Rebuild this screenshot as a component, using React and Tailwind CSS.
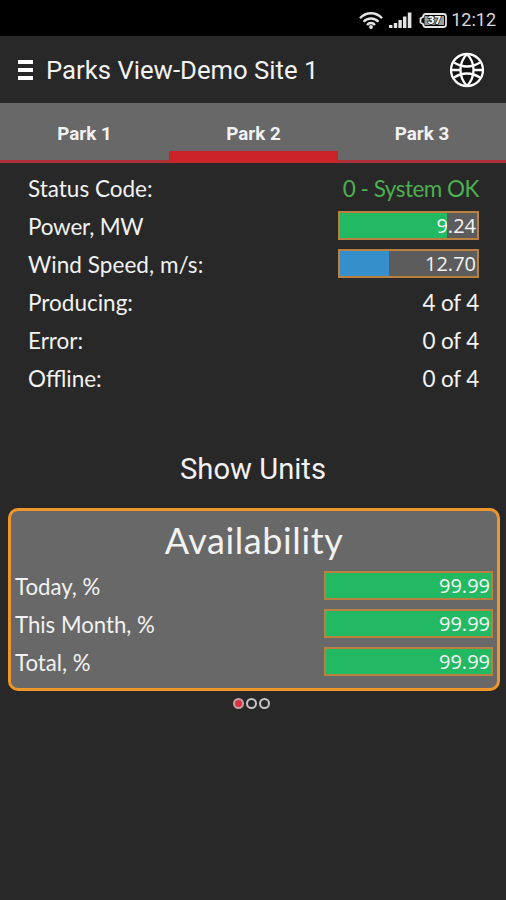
import React from 'react';

const tabs = ['Park 1', 'Park 2', 'Park 3'];

const statusRows = [
  { label: 'Status Code:', value: '0 - System OK', valueClass: 'text-[#4caf50] tracking-[-0.5px]' },
  { label: 'Power, MW', labelClass: 'tracking-[-0.2px]', bar: { value: '9.24', percent: 78, color: 'bg-[#22b962]' } },
  { label: 'Wind Speed, m/s:', labelClass: 'tracking-[0.05px]', bar: { value: '12.70', percent: 36, color: 'bg-[#348fca]' } },
  { label: 'Producing:', value: '4 of 4', valueClass: 'tracking-[-0.2px]' },
  { label: 'Error:', value: '0 of 4', valueClass: 'tracking-[-0.2px]' },
  { label: 'Offline:', value: '0 of 4', valueClass: 'tracking-[-0.2px]' },
];

const availability = [
  { label: 'Today, %', value: '99.99' },
  { label: 'This Month, %', value: '99.99' },
  { label: 'Total, %', value: '99.99' },
];

const WifiIcon = () => (
  <svg width="24" height="17" viewBox="0 0 24 17" fill="none" stroke="#e4e4e4" strokeWidth="2.4">
    <path d="M1 6.2C7 -0.4 17 -0.4 23 6.2" />
    <path d="M4.6 9.8C8.6 5.4 15.4 5.4 19.4 9.8" />
    <path d="M8 13C10.2 10.4 13.8 10.4 16 13" />
    <circle cx="12" cy="15" r="1.9" fill="#e4e4e4" stroke="none" />
  </svg>
);

const SignalIcon = () => (
  <svg width="23" height="16" viewBox="0 0 23 16" fill="#e4e4e4">
    <rect x="0" y="13" width="3.4" height="3" />
    <rect x="4.8" y="11" width="3.4" height="5" />
    <rect x="9.4" y="8" width="3.4" height="8" />
    <rect x="14" y="4.5" width="3.4" height="11.5" />
    <rect x="18.8" y="0.5" width="3.6" height="15.5" />
  </svg>
);

const BatteryIcon = () => (
  <svg width="28" height="15" viewBox="0 0 28 15">
    <path d="M6.5 1H24.5Q27 1 27 3.5V11.5Q27 14 24.5 14H6.5Q4.5 14 4 11L1.5 9.5V5.5L4 4Q4.5 1 6.5 1Z" fill="none" stroke="#e4e4e4" strokeWidth="1.8" />
    <rect x="5.5" y="3" width="19.5" height="9" fill="#9c9c9c" />
    <text x="15.5" y="11.4" textAnchor="middle" className="font-['Roboto'] text-[11.5px] font-black" fill="#ffffff" stroke="#111111" strokeWidth="1.5" paintOrder="stroke">37</text>
  </svg>
);

const GlobeIcon = () => (
  <svg width="36" height="36" viewBox="0 0 36 36" fill="none" stroke="#ffffff" strokeWidth="2.3">
    <circle cx="18" cy="18" r="17.5" fill="#141414" stroke="none" />
    <circle cx="18" cy="18" r="16" />
    <path d="M18 2C9.3 11 9.3 25 18 34" />
    <path d="M18 2C26.7 11 26.7 25 18 34" />
    <path d="M5 10.5Q18 18.5 31 10.5" />
    <path d="M5 25.5Q18 17.5 31 25.5" />
    <path d="M2 18H11.5M24.5 18H34" />
  </svg>
);

const ValueBar = ({ value, percent, color, className }) => (
  <div className={`relative bg-[#5c5c5c] border-2 border-[#b9803f] ${className}`}>
    <div className={`h-full ${color}`} style={{ width: `${percent}%` }}></div>
    <span className="absolute inset-0 flex items-center justify-end pr-px font-['Open_Sans',sans-serif] text-[20px] leading-none text-[#f5f5f5]">
      {value}
    </span>
  </div>
);

const App = () => {
  return (
    <div className="w-[506px] h-[900px] bg-[#282828] overflow-hidden font-['Lato',sans-serif] text-[#f2f2f2]">
      {/* System bar */}
      <div className="h-9 bg-black flex items-center justify-end pt-1 pr-[10px]">
        <WifiIcon />
        <div className="ml-[6px]"><SignalIcon /></div>
        <div className="ml-[7px]"><BatteryIcon /></div>
        <span className="ml-[4px] font-['Roboto',sans-serif] text-[18px] leading-none text-[#d8d8d8]">12:12</span>
      </div>

      {/* Header */}
      <div className="h-[67px] flex items-center pl-[18px] pr-[21px]">
        <div className="flex flex-col gap-1 pt-px w-[15px]">
          <div className="h-[4px] bg-white"></div>
          <div className="h-[4px] bg-white"></div>
          <div className="h-[4px] bg-white"></div>
        </div>
        <h1 className="ml-[13px] pt-[3px] font-['Roboto',sans-serif] text-[25.7px] leading-none">Parks View-Demo Site 1</h1>
        <div className="ml-auto"><GlobeIcon /></div>
      </div>

      {/* Tabs */}
      <div className="h-[60px] grid grid-cols-[169px_169px_168px] bg-[#686868] border-b-[3px] border-[#b0303a]">
        {tabs.map((tab, index) => (
          <div key={tab} className="relative flex items-center justify-center pt-[5px] font-['Roboto',sans-serif] text-[18.8px] font-bold leading-none">
            {tab}
            {index === 1 && <div className="absolute left-0 right-0 bottom-[-3px] h-3 bg-[#cc2229]"></div>}
          </div>
        ))}
      </div>

      {/* Park status */}
      <div className="pt-[7px] pl-7 pr-[27px] text-[22.5px] leading-none">
        {statusRows.map((row) => (
          <div key={row.label} className="h-[38px] flex items-center justify-between">
            <span className={`pt-px ${row.labelClass || ''}`}>{row.label}</span>
            {row.bar ? (
              <ValueBar {...row.bar} className="w-[141px] h-[29px] mb-[3px]" />
            ) : (
              <span className={`pt-px ${row.valueClass}`}>{row.value}</span>
            )}
          </div>
        ))}
      </div>

      <div className="mt-11 h-[54px] text-center font-['Roboto',sans-serif] text-[29.2px] leading-[54px]">Show Units</div>

      {/* Availability */}
      <div className="mt-3 ml-2 mr-[6px] h-[183px] rounded-[10px] border-[3px] border-[#ee9629] bg-[#686868] pl-[4px] pr-[4px]">
        <h2 className="h-[57px] pt-[7px] text-center text-[36px] leading-[44px] tracking-[0.6px]">Availability</h2>
        {availability.map((row) => (
          <div key={row.label} className="h-[38px] flex items-center justify-between text-[22.2px] leading-none">
            <span className="pt-px">{row.label}</span>
            <ValueBar value={row.value} percent={100} color="bg-[#22b962]" className="w-[169px] h-[29px] mb-[3px]" />
          </div>
        ))}
      </div>

      {/* Pager */}
      <div className="mt-[7px] flex justify-center gap-[2px] pr-[3px]">
        <div className="w-[11px] h-[11px] rounded-full border-2 border-[#c4a0a4] bg-[#dc3045]"></div>
        <div className="w-[11px] h-[11px] rounded-full border-2 border-[#c4c4c4]"></div>
        <div className="w-[11px] h-[11px] rounded-full border-2 border-[#c4c4c4]"></div>
      </div>
    </div>
  );
};

export default App;
